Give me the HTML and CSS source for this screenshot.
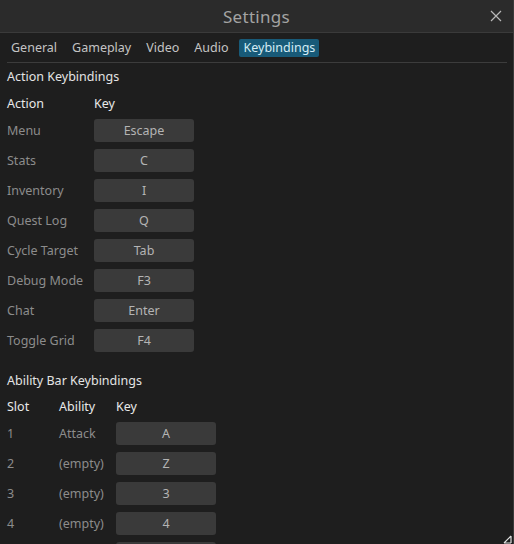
FILE: index.html
```html
<!DOCTYPE html>
<html lang="en">
<head>
    <meta charset="UTF-8">
    <title>Settings</title>
    <link rel="stylesheet" href="styles.css">
</head>
<body>
    <div class="window">
        <div class="titlebar">
            <span></span>
            <span class="title">Settings</span>
            <span class="close">
                <svg width="12" height="12" viewBox="0 0 12 12"><path d="M1 1L11 11M11 1L1 11" stroke="#b8b8b8" stroke-width="1.2"/></svg>
            </span>
        </div>

        <div class="content">
            <div class="tabs">
                <span class="tab">General</span>
                <span class="tab">Gameplay</span>
                <span class="tab">Video</span>
                <span class="tab">Audio</span>
                <span class="tab active">Keybindings</span>
            </div>

            <div class="section-title">Action Keybindings</div>
            <div class="table actions">
                <div class="head">Action</div><div class="head">Key</div>
                <div class="label">Menu</div><div class="key">Escape</div>
                <div class="label">Stats</div><div class="key">C</div>
                <div class="label">Inventory</div><div class="key">I</div>
                <div class="label">Quest Log</div><div class="key">Q</div>
                <div class="label">Cycle Target</div><div class="key">Tab</div>
                <div class="label">Debug Mode</div><div class="key">F3</div>
                <div class="label">Chat</div><div class="key">Enter</div>
                <div class="label">Toggle Grid</div><div class="key">F4</div>
            </div>

            <div class="section-title second">Ability Bar Keybindings</div>
            <div class="table abilities">
                <div class="head">Slot</div><div class="head">Ability</div><div class="head">Key</div>
                <div class="label">1</div><div class="label">Attack</div><div class="key">A</div>
                <div class="label">2</div><div class="label">(empty)</div><div class="key">Z</div>
                <div class="label">3</div><div class="label">(empty)</div><div class="key">3</div>
                <div class="label">4</div><div class="label">(empty)</div><div class="key">4</div>
                <div class="label"></div><div class="label"></div><div class="key"></div>
            </div>
        </div>

        <svg class="grip" width="10" height="10" viewBox="0 0 10 10"><path d="M1 9L8 2M8 2V9M8 9H1" stroke="#e0e0e0" stroke-width="1.2" fill="none"/></svg>
    </div>
</body>
</html>
```
FILE: styles.css
```css
html, body {
    margin: 0;
    padding: 0;
    background: #1e1e1e;
}
body {
    font-family: "Noto Sans", "Open Sans", sans-serif;
    font-size: 12.5px;
    color: #dedede;
}
.window {
    position: relative;
    width: 514px;
    height: 544px;
    overflow: hidden;
    background: #1e1e1e;
    border-right: 1px solid #3a3a3a;
    box-sizing: border-box;
}
.titlebar {
    height: 32px;
    background: #2b2b2b;
    border-bottom: 1px solid #3a3a3a;
    display: grid;
    grid-template-columns: 1fr auto 1fr;
    align-items: center;
}
.title {
    font-size: 17px;
    color: #a3a3a3;
    letter-spacing: 0.3px;
}
.close {
    justify-self: end;
    margin-right: 11px;
    display: flex;
}
.content {
    padding: 0 6px 0 7px;
}
.tabs {
    display: flex;
    gap: 7px;
    padding: 6px 0 5px 0;
    border-bottom: 1px solid #3c3c3c;
}
.tab {
    height: 18px;
    line-height: 18px;
    padding: 0 4px;
    color: #c4c4c4;
    border-radius: 2px;
}
.tab.active {
    background: #185a78;
    color: #d4ecf5;
}
.section-title {
    height: 20px;
    line-height: 20px;
    margin-top: 4px;
    color: #e4e4e4;
}
.section-title.second {
    margin-top: 16px;
}
.table {
    display: grid;
    grid-template-rows: 21px;
    grid-auto-rows: 30px;
    align-items: center;
}
.actions {
    grid-template-columns: 87px 100px;
    margin-top: 7px;
}
.abilities {
    grid-template-columns: 52px 57px 100px;
    margin-top: 6px;
}
.head {
    color: #e8e8e8;
    align-self: start;
    height: 20px;
    line-height: 20px;
}
.label {
    color: #8c8c8c;
    white-space: nowrap;
}
.key {
    height: 23px;
    line-height: 23px;
    background: #3a3a3a;
    color: #b4b4b4;
    text-align: center;
    border-radius: 3px;
}
.grip {
    position: absolute;
    right: 0;
    bottom: 0;
}
```
